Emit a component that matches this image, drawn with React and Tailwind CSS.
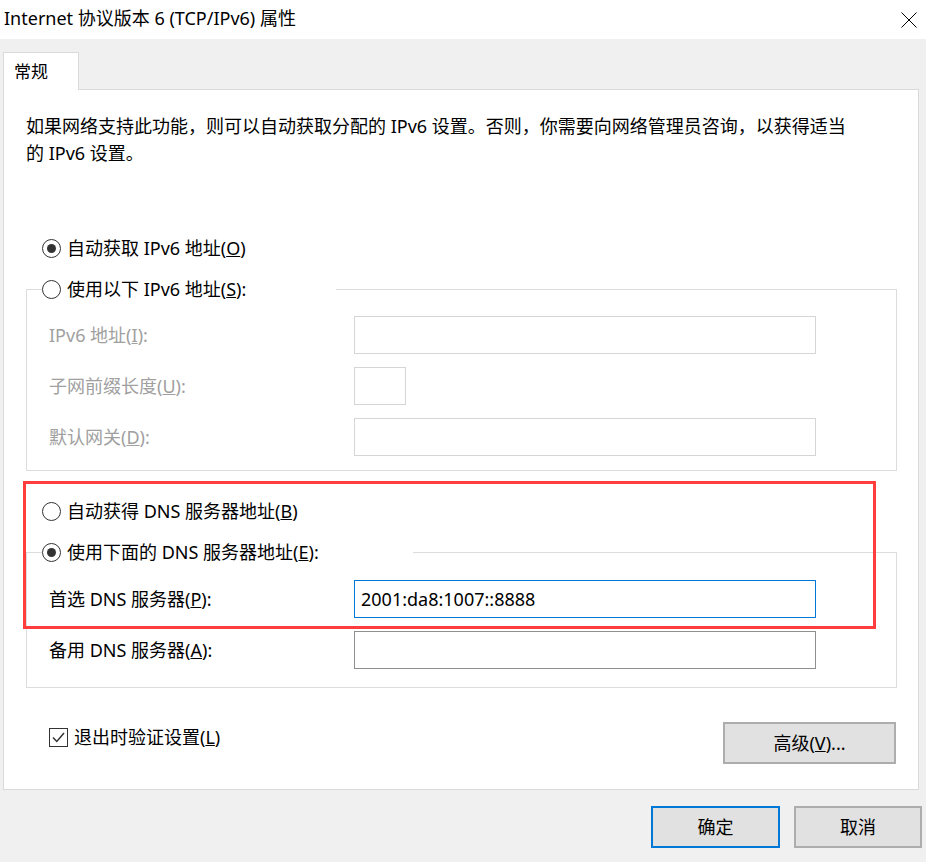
const Radio = ({ checked }) => (
  <span className="flex h-[19px] w-[19px] shrink-0 items-center justify-center rounded-full border-[1.5px] border-[#333] bg-white">
    {checked && <span className="h-[9px] w-[9px] rounded-full bg-[#333]" />}
  </span>
);

const RadioLabel = ({ checked, children }) => (
  <span className="flex h-[28px] items-center gap-[6px] text-black">
    <Radio checked={checked} />
    <span className="leading-[28px]">{children}</span>
  </span>
);

const Field = ({ label, disabled, value, small, focused, className = "" }) => {
  let border = "border-[#d5d5d5]";
  if (!disabled) border = "border-[#8f8f8f]";
  if (focused) border = "border-[#0078d7]";
  return (
    <div className={`flex h-[38px] items-center pl-[22px] ${className}`}>
      <span
        className={`w-[305px] leading-[28px] ${disabled ? "text-[#a0a0a0]" : "text-black"}`}
      >
        {label}
      </span>
      <div
        className={`flex h-[38px] items-center border bg-white px-[6px] ${border} ${
          small ? "w-[52px]" : "w-[462px]"
        }`}
      >
        {value && <span className="text-black">{value}</span>}
      </div>
    </div>
  );
};

export default function App() {
  return (
    <div className="relative flex h-[862px] w-[926px] flex-col bg-[#f0f0f0] font-['Noto_Sans','Noto_Sans_CJK_SC',sans-serif] text-[18px] text-black">
      {/* title bar */}
      <div className="flex h-[39px] items-center justify-between bg-white pb-[4px] pl-[4px] pr-[9px]">
        <span className="leading-[24px]">Internet 协议版本 6 (TCP/IPv6) 属性</span>
        <svg width="16" height="16" viewBox="0 0 16 16" className="mt-[4px]">
          <path d="M0.5 0.5 L15.5 15.5 M15.5 0.5 L0.5 15.5" stroke="#000" strokeWidth="1" />
        </svg>
      </div>

      {/* tab */}
      <div className="pt-[13px] pl-[3px]">
        <div className="relative z-10 -mb-[1px] flex h-[38px] w-[76px] items-center border-x border-t border-[#d9d9d9] bg-white pl-[10px] text-[17px]">
          常规
        </div>
      </div>

      {/* panel */}
      <div className="ml-[3px] flex h-[701px] w-[916px] flex-col border border-[#d9d9d9] bg-white">
        <p className="ml-[22px] mt-[23px] whitespace-nowrap leading-[27px]">
          如果网络支持此功能，则可以自动获取分配的 IPv6 设置。否则，你需要向网络管理员咨询，以获得适当
          <br />
          的 IPv6 设置。
        </p>

        <div className="ml-[38px] mt-[67px]">
          <RadioLabel checked>
            自动获取 IPv6 地址(<u>O</u>)
          </RadioLabel>
        </div>

        <fieldset className="ml-[22px] mt-[13px] w-[871px] border border-[#dcdcdc] pb-[14px]">
          <legend className="ml-[15px] w-[294px] bg-white">
            <RadioLabel>
              使用以下 IPv6 地址(<u>S</u>):
            </RadioLabel>
          </legend>
          <Field className="mt-[13px]" disabled label={<>IPv6 地址(<u>I</u>):</>} />
          <Field className="mt-[13px]" disabled small label={<>子网前缀长度(<u>U</u>):</>} />
          <Field className="mt-[13px]" disabled label={<>默认网关(<u>D</u>):</>} />
        </fieldset>

        <div className="ml-[38px] mt-[26px]">
          <RadioLabel>
            自动获得 DNS 服务器地址(<u>B</u>)
          </RadioLabel>
        </div>

        <fieldset className="ml-[22px] mt-[13px] w-[871px] border border-[#dcdcdc] pb-[18px]">
          <legend className="ml-[15px] w-[371px] bg-white">
            <RadioLabel checked>
              使用下面的 DNS 服务器地址(<u>E</u>):
            </RadioLabel>
          </legend>
          <Field
            className="mt-[14px]"
            focused
            value="2001:da8:1007::8888"
            label={<>首选 DNS 服务器(<u>P</u>):</>}
          />
          <Field className="mt-[13px]" label={<>备用 DNS 服务器(<u>A</u>):</>} />
        </fieldset>

        <div className="mt-[34px] flex items-start justify-between pl-[45px] pr-[22px]">
          <label className="mt-[1px] flex h-[28px] items-center gap-[6px]">
            <span className="flex h-[19px] w-[19px] items-center justify-center border-[1.5px] border-[#333] bg-white">
              <svg width="15" height="15" viewBox="0 0 15 15">
                <path d="M2 7.5 L5.8 11.5 L13 3" fill="none" stroke="#333" strokeWidth="1.5" />
              </svg>
            </span>
            <span>
              退出时验证设置(<u>L</u>)
            </span>
          </label>
          <button className="h-[42px] w-[173px] border-2 border-[#adadad] bg-[#e1e1e1]">
            高级(<u>V</u>)...
          </button>
        </div>
      </div>

      {/* dialog buttons */}
      <div className="mt-[16px] flex justify-end gap-[14px] pr-[4px]">
        <button className="h-[42px] w-[129px] border-2 border-[#0078d7] bg-[#e1e1e1]">确定</button>
        <button className="h-[42px] w-[128px] border-2 border-[#adadad] bg-[#e1e1e1]">取消</button>
      </div>

      {/* annotation */}
      <div className="pointer-events-none absolute left-[23px] top-[481px] h-[148px] w-[853px] border-[3px] border-[#ff3d3d]" />
    </div>
  );
}
